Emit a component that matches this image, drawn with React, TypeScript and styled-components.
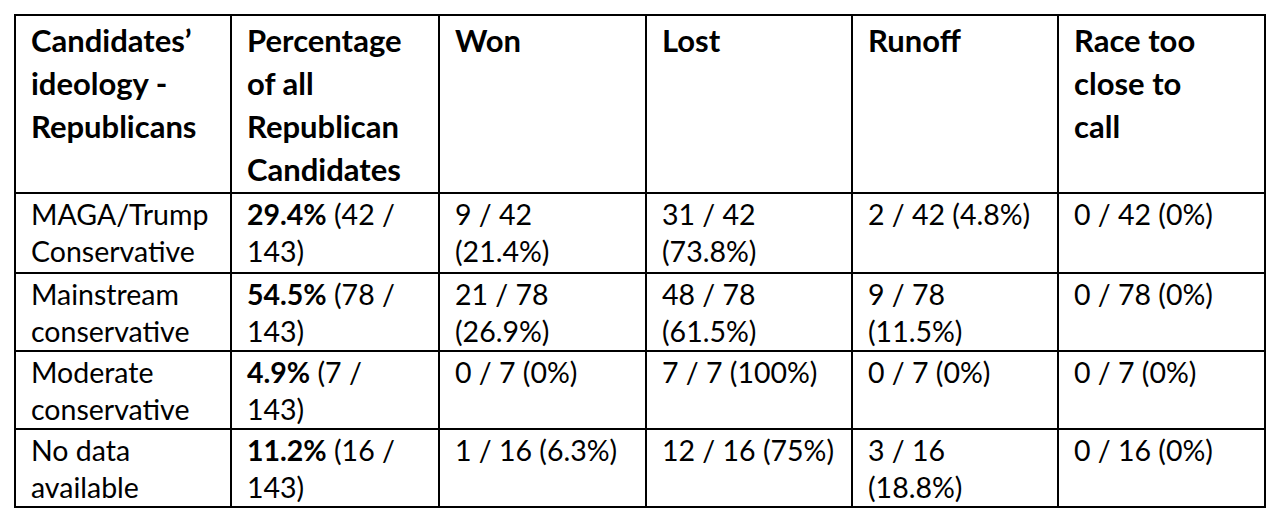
import styled, { createGlobalStyle } from 'styled-components';

const GlobalStyle = createGlobalStyle`
  html, body {
    margin: 0;
    padding: 0;
    background: #ffffff;
  }
  body {
    font-family: Lato, "Liberation Sans", sans-serif;
    color: #000000;
  }
`;

const Page = styled.div`
  padding: 14px;
`;

const Table = styled.table`
  border-collapse: collapse;
  table-layout: fixed;
  width: 1250px;
`;

const HeadCell = styled.th`
  border: 2px solid #000;
  padding: 3px 10px 0 15px;
  vertical-align: top;
  text-align: left;
  font-size: 31px;
  font-weight: 700;
  line-height: 43px;
  white-space: pre-line;
`;

const Cell = styled.td`
  border: 2px solid #000;
  padding: 2px 10px 0 15px;
  vertical-align: top;
  text-align: left;
  font-size: 28.5px;
  font-weight: 400;
  line-height: 37px;
  white-space: pre-line;
`;

const Row = styled.tr<{ h: number }>`
  height: ${({ h }) => h}px;
`;

const Pct = styled.b`
  font-weight: 700;
`;

const columns = [216, 208, 207, 206, 206, 207];

const headers = [
  'Candidates’\nideology -\nRepublicans',
  'Percentage\nof all\nRepublican\nCandidates',
  'Won',
  'Lost',
  'Runoff',
  'Race too\nclose to\ncall',
];

const rows = [
  { label: 'MAGA/Trump\nConservative', pct: '29.4%', share: ' (42 /\n143)', won: '9 / 42\n(21.4%)', lost: '31 / 42\n(73.8%)', runoff: '2 / 42 (4.8%)', close: '0 / 42 (0%)', h: 80 },
  { label: 'Mainstream\nconservative', pct: '54.5%', share: ' (78 /\n143)', won: '21 / 78\n(26.9%)', lost: '48 / 78\n(61.5%)', runoff: '9 / 78\n(11.5%)', close: '0 / 78 (0%)', h: 77 },
  { label: 'Moderate\nconservative', pct: '4.9%', share: ' (7 /\n143)', won: '0 / 7 (0%)', lost: '7 / 7 (100%)', runoff: '0 / 7 (0%)', close: '0 / 7 (0%)', h: 78 },
  { label: 'No data\navailable', pct: '11.2%', share: ' (16 /\n143)', won: '1 / 16 (6.3%)', lost: '12 / 16 (75%)', runoff: '3 / 16\n(18.8%)', close: '0 / 16 (0%)', h: 77 },
];

const App = () => {
  return (
    <Page>
      <GlobalStyle />
      <Table>
        <colgroup>
          {columns.map((w, i) => (
            <col key={i} style={{ width: w }} />
          ))}
        </colgroup>
        <thead>
          <Row h={178}>
            {headers.map((h) => (
              <HeadCell key={h}>{h}</HeadCell>
            ))}
          </Row>
        </thead>
        <tbody>
          {rows.map((r) => (
            <Row h={r.h} key={r.label}>
              <Cell>{r.label}</Cell>
              <Cell>
                <Pct>{r.pct}</Pct>
                {r.share}
              </Cell>
              <Cell>{r.won}</Cell>
              <Cell>{r.lost}</Cell>
              <Cell>{r.runoff}</Cell>
              <Cell>{r.close}</Cell>
            </Row>
          ))}
        </tbody>
      </Table>
    </Page>
  );
};

export default App;
